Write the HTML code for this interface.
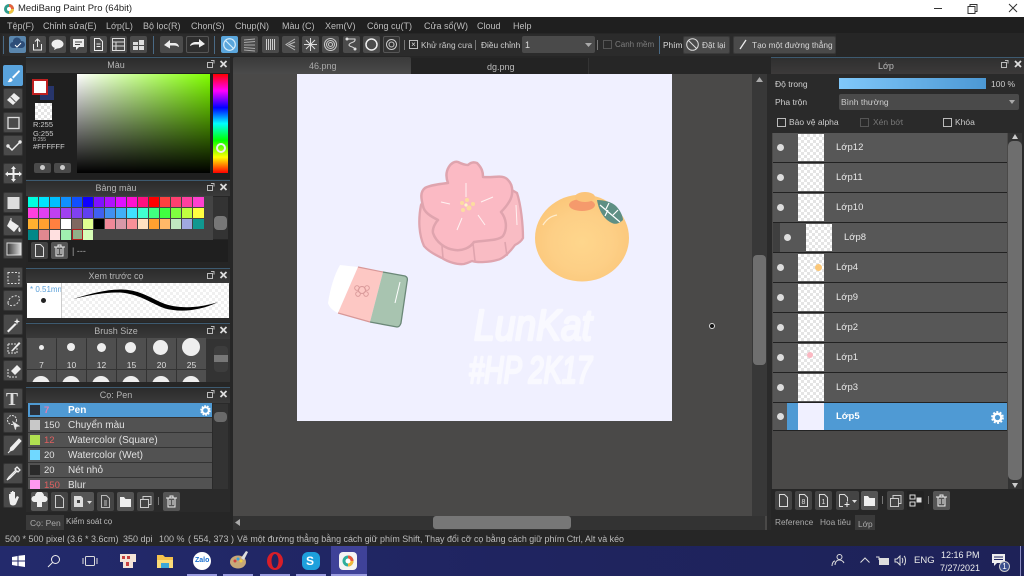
<!DOCTYPE html>
<html lang="vi"><head><meta charset="utf-8"><title>MediBang Paint Pro</title>
<style>
*{box-sizing:border-box}
html,body{margin:0;padding:0;width:1024px;height:576px;overflow:hidden;background:#262626;font-family:"Liberation Sans",sans-serif;font-size:9px;color:#cfcfcf}
div,span,svg{position:absolute}
.t{white-space:nowrap;line-height:12px}
.m{top:20px;font-size:9px;color:#bdbdbd;white-space:nowrap;line-height:12px}
.b{width:17px;height:17px;top:36px;background:#4b4b4b;border-radius:2px}
.b svg{left:0;top:0}
.l{left:3px;width:20px;height:21px;background:#4a4a4a;border-radius:2px;border:1px solid #333}
.l svg{left:1px;top:1px}
.h{left:26px;width:204px;height:16px;background:linear-gradient(#2b2b2b,#3a3a3a);border-top:1px solid #3d5a70;text-align:center;color:#b5b5b5;line-height:15px;font-size:9px;padding-right:24px}
.sep{width:1px;background:#777}
.s{width:11px;height:11px;border-right:1px solid #444;border-bottom:1px solid #444}
.cell{width:29px;height:31px;background:#4f4f4f}
.dot{background:#eee;border-radius:50%}
.num{width:29px;text-align:center;color:#ddd;line-height:10px;font-size:8.500px}
.row{left:28px;width:184px;height:15px;background:#525252;border-bottom:1px solid #333;font-size:9.500px;line-height:15px;color:#e0e0e0}
.row i{position:absolute;left:2px;top:2px;width:10px;height:10px;font-style:normal}
.row b{position:absolute;left:16px;font-weight:normal;top:0}
.row u{position:absolute;left:40px;text-decoration:none;top:0;font-size:10px;white-space:nowrap}
.lay{left:773px;width:234px;height:30px;background:#575757;border-bottom:1px solid #222}
.eye{width:7px;height:7px;border-radius:50%;background:#ddd;top:11px;left:4px}
.th{left:25px;top:1px;width:26px;height:27px;background-color:#fff;background-image:linear-gradient(45deg,#e4e4e4 25%,transparent 25%,transparent 75%,#e4e4e4 75%),linear-gradient(45deg,#e4e4e4 25%,transparent 25%,transparent 75%,#e4e4e4 75%);background-size:6px 6px;background-position:0 0,3px 3px}
.nm{left:63px;top:9px;font-size:9.500px;color:#e8e8e8;line-height:12px;white-space:nowrap}
.tb{width:17px;height:19px;background:#4a4a4a;border-radius:2px;top:491px}
.tb svg{left:0;top:0}
.tk{top:574px;height:2px;background:#9a9ce0}
</style></head><body>

<!-- title bar -->
<div style="left:0;top:0;width:1024px;height:17px;background:#fff"></div>
<svg style="left:3px;top:3px" width="12" height="12" viewBox="0 0 12 12"><circle cx="6" cy="6" r="5" fill="#2f9c8c"/><path d="M6 1a5 5 0 0 1 5 5H6z" fill="#e8623c"/><path d="M6 6h5a5 5 0 0 1-5 5z" fill="#f0c23c"/><circle cx="6" cy="6" r="2" fill="#fff"/></svg>
<div class="t" style="left:18px;top:3px;color:#222;font-size:9.500px">MediBang Paint Pro (64bit)</div>
<svg style="left:930px;top:1px" width="94" height="14" viewBox="0 0 94 14" fill="none" stroke="#333" stroke-width="1"><path d="M4 7.500h8"/><path d="M38 5.500h7v7h-7zM40 5.500v-2h7v7h-2"/><path d="M79 3l8 8M87 3l-8 8"/></svg>

<!-- menu -->
<div style="left:0;top:17px;width:1024px;height:16px;background:#1f1f1f"></div>
<div class="m" style="left:7px">Tệp(F)</div>
<div class="m" style="left:43px">Chỉnh sửa(E)</div>
<div class="m" style="left:106px">Lớp(L)</div>
<div class="m" style="left:143px">Bộ lọc(R)</div>
<div class="m" style="left:191px">Chọn(S)</div>
<div class="m" style="left:235px">Chụp(N)</div>
<div class="m" style="left:282px">Màu (C)</div>
<div class="m" style="left:325px">Xem(V)</div>
<div class="m" style="left:367px">Công cụ(T)</div>
<div class="m" style="left:424px">Cửa sổ(W)</div>
<div class="m" style="left:477px">Cloud</div>
<div class="m" style="left:513px">Help</div>

<!-- toolbar -->
<div style="left:0;top:33px;width:1024px;height:24px;background:#262626"></div>
<div style="left:2px;top:34px;width:834px;height:22px;background:#2b2b2b"></div>
<div class="sep" style="left:3px;top:36px;height:18px;background:#4a6a85"></div>
<div class="b" style="left:9px;background:#5a86ad"><svg width="17" height="17"><path d="M4 12a3 3 0 0 1 0-6 4 4 0 0 1 8-1 3.500 3.500 0 0 1 1 7z" fill="#2d4d78"/><path d="M6 9l2 2 4-4" stroke="#fff" fill="none"/></svg></div>
<div class="b" style="left:29px"><svg width="17" height="17" fill="none" stroke="#eee"><path d="M4.500 8v6h8V8M8.500 11V3M6 5.500l2.500-2.500 2.500 2.500"/></svg></div>
<div class="b" style="left:49px"><svg width="17" height="17"><ellipse cx="8.500" cy="8" rx="6" ry="4.500" fill="#eee"/><path d="M6 11l-1 3 4-2z" fill="#eee"/></svg></div>
<div class="b" style="left:70px"><svg width="17" height="17"><path d="M3 3h11v8H9l-3 3v-3H3z" fill="#eee"/><path d="M5 6h7M5 8.500h5" stroke="#444"/></svg></div>
<div class="b" style="left:90px"><svg width="17" height="17" fill="none" stroke="#eee"><path d="M4.500 2.500h5l3 3v9h-8zM6.500 8h4M6.500 10.500h4"/></svg></div>
<div class="b" style="left:110px"><svg width="17" height="17" fill="none" stroke="#ddd"><path d="M2.500 2.500h12v12h-12zM2.500 6h12M2.500 10h12M6 6v8"/></svg></div>
<div class="b" style="left:130px"><svg width="17" height="17"><path d="M3 6h5v3H3zM9 4h5v5H9zM3 10h5v4H3zM9 10h5v4H9z" fill="#ddd"/></svg></div>
<div class="sep" style="left:153px;top:36px;height:18px;background:#4a6a85"></div>
<div class="b" style="left:160px;width:23px"><svg width="23" height="17"><path d="M4 9l6-5v3h5c2 0 4 2 4 4-2-1-3-1.500-5-1.500h-4v3z" fill="#eee"/></svg></div>
<div class="b" style="left:186px;width:23px;background:#2e2e2e;border:1px solid #555"><svg width="21" height="15"><path d="M18 7l-6-5v3H8c-2 0-5 2-5 4 2-1 3-1.500 5-1.500h4v3z" fill="#eee"/></svg></div>
<div class="sep" style="left:214px;top:36px;height:18px;background:#4a6a85"></div>
<div class="b" style="left:221px;background:#5aa6dc"><svg width="17" height="17" fill="none" stroke="#d5ecfa" stroke-width="1.200"><circle cx="8.500" cy="8.500" r="5.800"/><path d="M4.500 4.500l8 8"/></svg></div>
<div class="b" style="left:241px"><svg width="17" height="17" fill="none" stroke="#aaa"><path d="M3 4l11-1M3 6.500l11-1M3 9h11M3 11.500l11 1M3 14l11 1"/></svg></div>
<div class="b" style="left:262px"><svg width="17" height="17" fill="none" stroke="#ccc"><path d="M4.500 3v11M6.500 3v11M8.500 3v11M10.500 3v11M12.500 3v11"/></svg></div>
<div class="b" style="left:282px"><svg width="17" height="17" fill="none" stroke="#bbb"><path d="M13 3L4 8.500 13 14M13 6L7 8.500 13 11"/></svg></div>
<div class="b" style="left:302px"><svg width="17" height="17" fill="none" stroke="#ddd"><path d="M8.500 2v13M2 8.500h13M4 4l9 9M13 4l-9 9"/></svg></div>
<div class="b" style="left:322px"><svg width="17" height="17" fill="none" stroke="#ccc"><circle cx="8.500" cy="8.500" r="6"/><circle cx="8.500" cy="8.500" r="4"/><circle cx="8.500" cy="8.500" r="2"/></svg></div>
<div class="b" style="left:343px"><svg width="17" height="17" fill="none" stroke="#ddd"><path d="M4 3h8c1 4-6 3-6 6 0 2 4 1 6 4"/><circle cx="4" cy="3" r="1" fill="#eee"/><circle cx="12" cy="13" r="1" fill="#eee"/></svg></div>
<div class="b" style="left:363px"><svg width="17" height="17" fill="none" stroke="#eee" stroke-width="1.500"><circle cx="8.500" cy="8.500" r="5.500"/></svg></div>
<div class="b" style="left:383px;background:#333;border:1px solid #555"><svg width="15" height="15" fill="none" stroke="#ccc"><circle cx="7.500" cy="7.500" r="5"/><circle cx="7.500" cy="7.500" r="2.500"/></svg></div>
<div class="sep" style="left:404px;top:40px;height:10px"></div>
<div style="left:409px;top:40px;width:9px;height:9px;border:1px solid #bbb;color:#ddd;font-size:8px;line-height:7px;text-align:center">×</div>
<div class="t" style="left:421px;top:39px;color:#c9c9c9;font-size:8.300px">Khử răng cưa</div>
<div class="sep" style="left:475px;top:40px;height:10px"></div>
<div class="t" style="left:481px;top:39px;color:#d5d5d5;font-size:8.300px">Điều chỉnh</div>
<div style="left:522px;top:36px;width:73px;height:17px;background:#4a4a4a;border-radius:2px"></div>
<div class="t" style="left:525px;top:39px;color:#ddd">1</div>
<svg style="left:585px;top:43px" width="7" height="4"><path d="M0 0h7L3.500 4z" fill="#aaa"/></svg>
<div class="sep" style="left:597px;top:40px;height:10px"></div>
<div style="left:603px;top:40px;width:9px;height:9px;border:1px solid #555"></div>
<div class="t" style="left:615px;top:39px;color:#7d7d7d;font-size:8px">Canh mềm</div>
<div class="sep" style="left:659px;top:36px;height:18px;background:#4a6a85"></div>
<div class="t" style="left:663px;top:39px;color:#ddd;font-size:8.300px">Phím</div>
<div style="left:683px;top:36px;width:47px;height:18px;background:#4a4a4a;border-radius:2px;border:1px solid #3a3a3a"></div>
<svg style="left:685px;top:37px" width="15" height="15" fill="none" stroke="#ddd"><circle cx="7.500" cy="7.500" r="5.800"/><path d="M3.500 3.500l8 8"/></svg>
<div class="t" style="left:702px;top:39px;color:#d5d5d5;font-size:8.300px">Đặt lại</div>
<div style="left:733px;top:36px;width:103px;height:18px;background:#4a4a4a;border-radius:2px;border:1px solid #3a3a3a"></div>
<svg style="left:738px;top:39px" width="10" height="11"><path d="M2 10l6-9" stroke="#eee" stroke-width="1.300"/></svg>
<div class="t" style="left:752px;top:39px;color:#d5d5d5;font-size:8.300px">Tạo một đường thẳng</div>

<!-- left toolbar -->
<div style="left:0;top:57px;width:26px;height:473px;background:#262626"></div>
<div class="l" style="top:65px;background:#59a3dc;border-color:#59a3dc"><svg width="17" height="18"><path d="M14 3L7 10l1.500 1.500L15 4.500zM6 11c-2 0-2 3-3.500 4 3 .5 5.500-.5 5-2.500z" fill="#fff"/></svg></div>
<div class="l" style="top:88px"><svg width="17" height="18"><path d="M2 10l7-7 6 5-7 7z" fill="#eee"/><path d="M5.500 7l5 5" stroke="#555"/></svg></div>
<div class="l" style="top:112px"><svg width="17" height="18"><rect x="3" y="3.500" width="11" height="11" fill="none" stroke="#ddd" stroke-width="1.300"/></svg></div>
<div class="l" style="top:135px"><svg width="17" height="18" fill="none" stroke="#eee" stroke-width="1.400"><path d="M3 9l4 4 8-8"/><circle cx="3" cy="9" r="1"/><circle cx="15" cy="5" r="1"/></svg></div>
<div class="l" style="top:163px"><svg width="17" height="18"><path d="M8.500 1l2.500 3H9.500v4H14V6.500L17 9l-3 2.500V10H9.500v4H11l-2.500 3L6 14h1.500v-4H3v1.500L0 9l3-2.500V8h4.500V4H6z" fill="#eee"/></svg></div>
<div class="l" style="top:192px"><svg width="17" height="18"><rect x="2.500" y="3" width="12" height="12" fill="#ddd"/></svg></div>
<div class="l" style="top:215px"><svg width="17" height="18"><path d="M5 3l9 6-5 6-7-6z" fill="#eee"/><path d="M6 1v5" stroke="#eee"/><path d="M14 10c2 2 2 4 1 5-2 0-2-3-1-5z" fill="#eee"/></svg></div>
<div class="l" style="top:238px"><svg width="17" height="18"><defs><linearGradient id="g1"><stop offset="0" stop-color="#333"/><stop offset="1" stop-color="#ddd"/></linearGradient></defs><rect x="2" y="3" width="14" height="12" fill="url(#g1)" stroke="#ddd"/></svg></div>
<div class="l" style="top:267px"><svg width="17" height="18"><rect x="3" y="3.500" width="11" height="11" fill="none" stroke="#ddd" stroke-dasharray="2 1.500"/></svg></div>
<div class="l" style="top:290px"><svg width="17" height="18"><path d="M3 11c0-5 6-8 10-7 3 2 1 7-3 9-3 1-7 1-7-2z" fill="none" stroke="#ddd" stroke-dasharray="2 1.500"/></svg></div>
<div class="l" style="top:314px"><svg width="17" height="18"><path d="M2 15l8-8 1.500 1.500-8 8z" fill="#eee"/><path d="M12 2l.7 2.500L15 5.500l-2.300 1L12 9l-.7-2.500L9 5.500l2.300-1z" fill="#eee"/></svg></div>
<div class="l" style="top:337px"><svg width="17" height="18"><path d="M3 5h8M3 5v9h9V9" fill="none" stroke="#ddd" stroke-dasharray="2 1"/><path d="M6 12l8-9 1.500 1.500-8 8z" fill="#eee"/></svg></div>
<div class="l" style="top:360px"><svg width="17" height="18"><path d="M3 7v8h9" fill="none" stroke="#ddd" stroke-dasharray="2 1"/><path d="M6 9l6-6 4 4-6 6z" fill="#eee"/></svg></div>
<div class="l" style="top:388px"><div class="t" style="left:2px;top:2px;font:bold 18px/17px 'Liberation Serif',serif;color:#ddd">T</div></div>
<div class="l" style="top:412px"><svg width="17" height="18" fill="none" stroke="#ddd"><circle cx="7" cy="6" r="4.500" stroke-dasharray="2 1"/><path d="M8 8l6 4-3 .5-.5 3z" fill="#eee"/></svg></div>
<div class="l" style="top:435px"><svg width="17" height="18"><path d="M14 2l2 2-8 9-3 1 .5-3zM5 14l-2 2" fill="#eee" stroke="#eee"/></svg></div>
<div class="l" style="top:463px"><svg width="17" height="18"><path d="M12 2l3 3-2 2-1-1-7 7-3 2 2-3 7-7-1-1z" fill="none" stroke="#eee" stroke-width="1.300"/></svg></div>
<div class="l" style="top:487px"><svg width="17" height="18"><path d="M4 9V5h1.500v4V3H7v6V2h1.500v7V3H10v7l2-3 2 1-3 7c-1 2-5 2-6 0z" fill="#eee"/></svg></div>

<!-- colour panel -->
<div style="left:26px;top:73px;width:204px;height:106px;background:#1f1f1f"></div>
<div class="h" style="top:57px">Màu</div>
<svg style="left:207px;top:60px" width="22" height="9"><path d="M.5 2.500h5v5h-5zM4 .5h3v3" fill="none" stroke="#bbb"/><path d="M13.500 1l6 6M19.500 1l-6 6" stroke="#ddd" stroke-width="1.800"/></svg>
<div style="left:40px;top:86px;width:14px;height:14px;background:#27356b"></div>
<div style="left:32px;top:79px;width:16px;height:16px;background:#fff;border:2px solid #c02020"></div>
<div class="th" style="left:35px;top:103px;width:17px;height:17px"></div>
<div class="t" style="left:33px;top:120px;font-size:7.500px;line-height:9px;color:#ccc">R:255<br>G:255</div>
<div class="t" style="left:33px;top:137px;font-size:5px;line-height:6px;color:#bbb">B:255</div>
<div class="t" style="left:33px;top:142px;font-size:7.500px;line-height:10px;color:#ccc">#FFFFFF</div>
<div style="left:34px;top:163px;width:17px;height:10px;background:#4a4a4a;border-radius:2px"></div>
<div style="left:54px;top:163px;width:17px;height:10px;background:#4a4a4a;border-radius:2px"></div>
<div class="dot" style="left:40px;top:165px;width:5px;height:5px;background:#ccc"></div>
<div class="dot" style="left:60px;top:165px;width:5px;height:5px;background:#ccc"></div>
<div style="left:77px;top:74px;width:133px;height:99px;background:linear-gradient(transparent,#000),linear-gradient(90deg,#fff,#80ff00)"></div>
<div style="left:213px;top:74px;width:15px;height:99px;background:linear-gradient(#ff0000 0%,#ff00ff 17%,#0000ff 34%,#00ffff 50%,#00ff00 67%,#ffff00 84%,#ff0000 100%)"></div>
<div style="left:216px;top:143px;width:10px;height:10px;border:2px solid #eee;border-radius:50%"></div>

<!-- palette panel -->
<div style="left:26px;top:196px;width:204px;height:72px;background:#252525"></div>
<div class="h" style="top:180px">Bảng màu</div>
<svg style="left:207px;top:183px" width="22" height="9"><path d="M.5 2.500h5v5h-5zM4 .5h3v3" fill="none" stroke="#bbb"/><path d="M13.500 1l6 6M19.500 1l-6 6" stroke="#ddd" stroke-width="1.800"/></svg>
<div style="left:28px;top:196px;width:185px;height:44px;background:#444"></div>
<div class="s" style="left:28px;top:197px;background:#00ffe0"></div><div class="s" style="left:39px;top:197px;background:#00e4ff"></div><div class="s" style="left:50px;top:197px;background:#00bfff"></div><div class="s" style="left:61px;top:197px;background:#1090ff"></div><div class="s" style="left:72px;top:197px;background:#1050ff"></div><div class="s" style="left:83px;top:197px;background:#1000ff"></div><div class="s" style="left:94px;top:197px;background:#8010ff"></div><div class="s" style="left:105px;top:197px;background:#b010ff"></div><div class="s" style="left:116px;top:197px;background:#e010ff"></div><div class="s" style="left:127px;top:197px;background:#ff10d0"></div><div class="s" style="left:138px;top:197px;background:#ff1080"></div><div class="s" style="left:149px;top:197px;background:#ff0000"></div><div class="s" style="left:160px;top:197px;background:#ff4040"></div><div class="s" style="left:171px;top:197px;background:#ff4070"></div><div class="s" style="left:182px;top:197px;background:#ff40a0"></div><div class="s" style="left:193px;top:197px;background:#ff40d0;width:12px"></div>
<div class="s" style="left:28px;top:208px;background:#ff40e0"></div><div class="s" style="left:39px;top:208px;background:#e040f0"></div><div class="s" style="left:50px;top:208px;background:#c040f0"></div><div class="s" style="left:61px;top:208px;background:#a040f0"></div><div class="s" style="left:72px;top:208px;background:#8040f0"></div><div class="s" style="left:83px;top:208px;background:#6040f0"></div><div class="s" style="left:94px;top:208px;background:#4060f0"></div><div class="s" style="left:105px;top:208px;background:#4090f0"></div><div class="s" style="left:116px;top:208px;background:#40b0f8"></div><div class="s" style="left:127px;top:208px;background:#40e0ff"></div><div class="s" style="left:138px;top:208px;background:#40ffd0"></div><div class="s" style="left:149px;top:208px;background:#40ff80"></div><div class="s" style="left:160px;top:208px;background:#40ff40"></div><div class="s" style="left:171px;top:208px;background:#80ff40"></div><div class="s" style="left:182px;top:208px;background:#c0ff40"></div><div class="s" style="left:193px;top:208px;background:#ffff40;width:12px"></div>
<div class="s" style="left:28px;top:219px;background:#ffb030"></div><div class="s" style="left:39px;top:219px;background:#ffa030"></div><div class="s" style="left:50px;top:219px;background:#ff8040"></div><div class="s" style="left:61px;top:219px;background:#ffffff"></div><div class="s" style="left:72px;top:219px;background:#806860"></div><div class="s" style="left:83px;top:219px;background:#e0ff90"></div><div class="s" style="left:94px;top:219px;background:#000000"></div><div class="s" style="left:105px;top:219px;background:#f08898"></div><div class="s" style="left:116px;top:219px;background:#d898a8"></div><div class="s" style="left:127px;top:219px;background:#f89098"></div><div class="s" style="left:138px;top:219px;background:#ffe0c0"></div><div class="s" style="left:149px;top:219px;background:#ffa030"></div><div class="s" style="left:160px;top:219px;background:#ffb868"></div><div class="s" style="left:171px;top:219px;background:#c0e8c0"></div><div class="s" style="left:182px;top:219px;background:#a0a8e0"></div><div class="s" style="left:193px;top:219px;background:#109890;width:12px"></div>
<div class="s" style="left:28px;top:230px;background:#008888"></div><div class="s" style="left:39px;top:230px;background:#e08890"></div><div class="s" style="left:50px;top:230px;background:#ffe0e0"></div><div class="s" style="left:61px;top:230px;background:#a0f0b0"></div><div class="s" style="left:72px;top:229px;background:#90b088;border:1px solid #b02020;height:11px"></div><div class="s" style="left:83px;top:230px;background:#d8ffb8"></div>
<div style="left:213px;top:197px;width:15px;height:42px;background:#333"></div>
<div style="left:214px;top:216px;width:13px;height:14px;background:#777;border-radius:4px"></div>
<div style="left:28px;top:240px;width:200px;height:22px;background:#1f1f1f"></div>
<div class="b" style="left:31px;top:242px;background:#444"><svg width="17" height="17" fill="none" stroke="#ddd"><path d="M4.500 2.500h5l3 3v9h-8z"/></svg></div>
<div class="b" style="left:51px;top:242px;background:#555"><svg width="17" height="17" fill="none" stroke="#eee"><path d="M3 5h11M5 5v9h7V5M7 5V3h3v2M7 7v5M10 7v5"/></svg></div>
<div class="t" style="left:72px;top:245px;color:#aaa">| ---</div>

<!-- preview panel -->
<div style="left:26px;top:284px;width:204px;height:38px;background:#2a2a2a"></div>
<div class="h" style="top:268px">Xem trước cọ</div>
<svg style="left:207px;top:271px" width="22" height="9"><path d="M.5 2.500h5v5h-5zM4 .5h3v3" fill="none" stroke="#bbb"/><path d="M13.500 1l6 6M19.500 1l-6 6" stroke="#ddd" stroke-width="1.800"/></svg>
<div style="left:27px;top:283px;width:35px;height:35px;background:#fff;border-right:1px solid #ccc;overflow:hidden"><div class="t" style="left:3px;top:1px;color:#5a9fd8;font-size:8px">* 0.51mm</div></div>
<div class="dot" style="left:41px;top:298px;width:5px;height:5px;background:#222"></div>
<div class="th" style="left:62px;top:283px;width:167px;height:35px;background-image:linear-gradient(45deg,#f0f0f0 25%,transparent 25%,transparent 75%,#f0f0f0 75%),linear-gradient(45deg,#f0f0f0 25%,transparent 25%,transparent 75%,#f0f0f0 75%)"></div>
<svg style="left:62px;top:283px" width="167" height="35" viewBox="62 283 167 35"><path d="M73 299C90 294 105 289.500 120 289.500C140 289.500 150 298 165 304C180 309 200 308 218 302C200 311 180 312.500 165 308.500C150 303 140 294 120 292.500C105 292 90 295 73 299z" fill="#000"/></svg>

<!-- brush size -->
<div style="left:26px;top:339px;width:204px;height:48px;background:#333"></div>
<div class="h" style="top:323px">Brush Size</div>
<svg style="left:207px;top:326px" width="22" height="9"><path d="M.5 2.500h5v5h-5zM4 .5h3v3" fill="none" stroke="#bbb"/><path d="M13.500 1l6 6M19.500 1l-6 6" stroke="#ddd" stroke-width="1.800"/></svg>
<div class="cell" style="left:27px;top:338px"></div><div class="cell" style="left:57px;top:338px"></div><div class="cell" style="left:87px;top:338px"></div><div class="cell" style="left:117px;top:338px"></div><div class="cell" style="left:147px;top:338px"></div><div class="cell" style="left:177px;top:338px"></div>
<div class="cell" style="left:27px;top:370px;height:12px"></div><div class="cell" style="left:57px;top:370px;height:12px"></div><div class="cell" style="left:87px;top:370px;height:12px"></div><div class="cell" style="left:117px;top:370px;height:12px"></div><div class="cell" style="left:147px;top:370px;height:12px"></div><div class="cell" style="left:177px;top:370px;height:12px"></div>
<div class="dot" style="left:39px;top:345px;width:5px;height:5px"></div><div class="dot" style="left:67px;top:343px;width:8px;height:8px"></div><div class="dot" style="left:97px;top:343px;width:9px;height:9px"></div><div class="dot" style="left:125px;top:342px;width:11px;height:11px"></div><div class="dot" style="left:153px;top:340px;width:15px;height:15px"></div><div class="dot" style="left:182px;top:338px;width:18px;height:18px"></div>
<div class="num" style="left:27px;top:360px">7</div><div class="num" style="left:57px;top:360px">10</div><div class="num" style="left:87px;top:360px">12</div><div class="num" style="left:117px;top:360px">15</div><div class="num" style="left:147px;top:360px">20</div><div class="num" style="left:177px;top:360px">25</div>
<div class="dot" style="left:32px;top:376px;width:18px;height:18px;clip-path:inset(0 0 12px 0)"></div><div class="dot" style="left:62px;top:376px;width:18px;height:18px;clip-path:inset(0 0 12px 0)"></div><div class="dot" style="left:92px;top:376px;width:18px;height:18px;clip-path:inset(0 0 12px 0)"></div><div class="dot" style="left:122px;top:376px;width:18px;height:18px;clip-path:inset(0 0 12px 0)"></div><div class="dot" style="left:152px;top:376px;width:18px;height:18px;clip-path:inset(0 0 12px 0)"></div><div class="dot" style="left:182px;top:376px;width:18px;height:18px;clip-path:inset(0 0 12px 0)"></div>
<div style="left:26px;top:382px;width:204px;height:5px;background:#262626"></div>
<div style="left:214px;top:346px;width:14px;height:26px;background:#3d3d3d;border-radius:4px"></div>
<div style="left:214px;top:355px;width:14px;height:7px;background:#777"></div>

<!-- brush list -->
<div style="left:26px;top:403px;width:204px;height:109px;background:#2a2a2a"></div>
<div class="h" style="top:387px">Cọ: Pen</div>
<svg style="left:207px;top:390px" width="22" height="9"><path d="M.5 2.500h5v5h-5zM4 .5h3v3" fill="none" stroke="#bbb"/><path d="M13.500 1l6 6M19.500 1l-6 6" stroke="#ddd" stroke-width="1.800"/></svg>
<div class="row" style="top:403px;background:#4f9ad4;color:#fff;font-weight:bold"><i style="background:#2a2f3a"></i><b style="color:#e080b0;font-weight:bold">7</b><u>Pen</u></div>
<svg style="left:200px;top:405px" width="11" height="11"><circle cx="5.500" cy="5.500" r="3.300" fill="none" stroke="#fff" stroke-width="2"/><circle cx="5.500" cy="5.500" r="4.600" fill="none" stroke="#fff" stroke-width="1.400" stroke-dasharray="1.600 1.300"/></svg>
<div class="row" style="top:418px"><i style="background:#c8c8c8"></i><b>150</b><u>Chuyển màu</u></div>
<div class="row" style="top:433px"><i style="background:#b0e050"></i><b style="color:#e06060">12</b><u>Watercolor (Square)</u></div>
<div class="row" style="top:448px"><i style="background:#70d8ff"></i><b>20</b><u>Watercolor (Wet)</u></div>
<div class="row" style="top:463px"><i style="background:#2a2a2a"></i><b>20</b><u>Nét nhỏ</u></div>
<div class="row" style="top:478px;height:11px;overflow:hidden;border:0"><i style="background:#ff98f0"></i><b style="color:#e06060">150</b><u>Blur</u></div>
<div style="left:213px;top:404px;width:15px;height:85px;background:#333"></div>
<div style="left:214px;top:412px;width:13px;height:10px;background:#6a6a6a;border-radius:4px"></div>
<div class="tb" style="left:31px;top:492px;background:#555"><svg width="17" height="19"><path d="M3 10a3 3 0 0 1 1-6 4.500 4.500 0 0 1 9 0 3 3 0 0 1 1 6h-3v5H6v-5z" fill="#eee"/></svg></div>
<div class="tb" style="left:51px;top:492px;background:#444"><svg width="17" height="19" fill="none" stroke="#ccc"><path d="M4.500 3.500h5l3 3v9h-8z"/></svg></div>
<div class="tb" style="left:71px;top:492px;width:23px;background:#555"><svg width="23" height="19"><path d="M3 4h7l2 2v9H3z" fill="#ddd"/><path d="M6 8h3v3H6z" fill="#444"/><path d="M16 9h5l-2.500 3z" fill="#ddd"/></svg></div>
<div class="tb" style="left:97px;top:492px;background:#444"><svg width="17" height="19" fill="none" stroke="#bbb"><path d="M4.500 3.500h5l3 3v9h-8zM7 9h3M7 11h3M7 13h3"/></svg></div>
<div class="tb" style="left:117px;top:492px;background:#555"><svg width="17" height="19"><path d="M3 5h4l1.500 2H14v8H3z" fill="#eee"/></svg></div>
<div class="tb" style="left:137px;top:492px;background:#444"><svg width="17" height="19" fill="none" stroke="#ccc"><path d="M3.500 7.500h8v8h-8zM6 7V4.500h8v8h-2"/></svg></div>
<div class="sep" style="left:158px;top:497px;height:8px"></div>
<div class="tb" style="left:163px;top:492px;background:#555"><svg width="17" height="19" fill="none" stroke="#eee"><path d="M3 6h11M5 6v9h7V6M7 6V4h3v2M7 8v5M10 8v5"/></svg></div>

<!-- left tabs -->
<div style="left:26px;top:512px;width:204px;height:18px;background:#262626"></div>
<div style="left:26px;top:515px;width:38px;height:15px;background:#3a3a3a"></div>
<div class="t" style="left:30px;top:517px;color:#aaa;font-size:8.500px">Cọ: Pen</div>
<div class="t" style="left:66px;top:516px;color:#bbb;font-size:8px">Kiểm soát cọ</div>

<!-- tabs row -->
<div style="left:230px;top:56px;width:541px;height:18px;background:#262626"></div>
<div style="left:233px;top:57px;width:178px;height:17px;background:linear-gradient(#3a3a3a,#4a4a4a);border-radius:2px 2px 0 0"></div>
<div class="t" style="left:309px;top:60px;color:#aaa">46.png</div>
<div style="left:411px;top:58px;width:178px;height:16px;background:#232323;border-right:1px solid #333"></div>
<div class="t" style="left:487px;top:61px;color:#bbb">dg.png</div>

<!-- canvas area -->
<div style="left:233px;top:74px;width:538px;height:456px;background:#4a4948"></div>
<div style="left:752px;top:74px;width:15px;height:442px;background:#383838"></div>
<div style="left:753px;top:255px;width:13px;height:110px;background:#6f6f6f;border-radius:4px"></div>
<svg style="left:756px;top:77px" width="7" height="5"><path d="M3.500 0L7 5H0z" fill="#aaa"/></svg>
<div style="left:233px;top:516px;width:532px;height:14px;background:#333"></div>
<div style="left:433px;top:516px;width:138px;height:13px;background:#777;border-radius:3px"></div>
<svg style="left:235px;top:519px" width="5" height="7"><path d="M0 3.500L5 0v7z" fill="#aaa"/></svg>
<div style="left:767px;top:74px;width:4px;height:456px;background:#2a2a2a"></div>
<svg style="left:708px;top:322px" width="8" height="8"><circle cx="4" cy="4" r="2.500" fill="#111" stroke="#ddd"/></svg>

<!-- canvas art: coordinates are page coordinates -->
<svg style="left:297px;top:74px" width="375" height="347" viewBox="297 74 375 347">
<defs><radialGradient id="org" cx=".5" cy=".55" r=".55"><stop offset="0" stop-color="#fed68c"/><stop offset=".6" stop-color="#fdcf86"/><stop offset="1" stop-color="#fbc77a"/></radialGradient></defs>
<rect x="297" y="74" width="375" height="347" fill="#f0f0ff"/>
<!-- mochi base -->
<path d="M421 205C418 220 419 235 424 246C430 253 438 256 442 258C448 262 458 265 464 264C468 263 470 262 472 261C478 263 490 262 497 260C503 259 510 252 515 245C519 243 522 240 523 238C523 225 521 205 517 193L505 186L430 190z" fill="#f9bcc4" stroke="#dfa4ae" stroke-width="2.300" stroke-linejoin="round"/>
<path d="M442 246l1 12M473 243l2 18M505 242l2 14" fill="none" stroke="#dfa4ae" stroke-width="1.600"/>
<path d="M516 205l1 20" stroke="#fff0f0" stroke-width="1"/>
<!-- flower -->
<path d="M448 183C443 170 452 160 458 162C462 164 466 165 468 165Q472 161 477 163C482 168 483 172 483 177C495 178 503 174 508 180C514 186 513 196 509 202C506 207 503 210 501 212C506 218 508 228 503 236C498 241 485 240 474 242C470 248 462 251 455 250C445 249 436 242 433 233C432 228 436 222 438 220C430 216 424 212 423 206C421 198 420 192 425 188C430 185 440 184 448 183z" fill="#fbbac4" stroke="#dfa4ae" stroke-width="2.500" stroke-linejoin="round"/>
<g fill="none" stroke="#fff2f2" stroke-width="1"><path d="M466 183l0 14M441 202l9 2M493 197l-12 5M457 230l5-12M485 225l-7-10"/></g>
<g fill="#fcdca0"><circle cx="462" cy="203" r="2"/><circle cx="467" cy="200" r="2"/><circle cx="463" cy="210" r="2"/><circle cx="469" cy="208" r="2.500"/><circle cx="473" cy="204" r="2"/><circle cx="466" cy="205" r="1.600" fill="#fff5c8"/></g>
<!-- orange -->
<ellipse cx="582" cy="238" rx="47" ry="43.500" fill="url(#org)"/>
<path d="M543 225c3-5 8-9 14-10" stroke="#ffeccc" stroke-width="1.300" fill="none"/>
<ellipse cx="582" cy="205" rx="13" ry="6" fill="#f59a6c"/>
<ellipse cx="585" cy="197" rx="10" ry="5" fill="#fbc47a"/>
<path d="M597 200C604 200 612 202 616 206C620 210 623 216 623 220C620 223 616 225 612 223C605 220 599 212 597 200z" fill="#5e8f84"/>
<path d="M600 205l20 17M608 210l-3 6M613 215l5-5M606 209l3-6" stroke="#fff" stroke-width="1.200" fill="none"/>
<!-- eraser -->
<path d="M340 265L358 267L338 313C333 311 329 307 328 303C330 290 334 275 340 265z" fill="#fff"/>
<path d="M358 267L383 272L370 322L338 313z" fill="#fdc8c4"/>
<path d="M383 272L405 276C407 277 408 278 407 282L401 323C400 326 399 327 397 327L370 322z" fill="#a8c4b0"/>
<path d="M358 267L383 272M338 313L370 322" stroke="#d89898" stroke-width="1.200" fill="none"/>
<path d="M383 272L405 276C407 277 408 278 407 282L401 323C400 326 399 327 397 327L370 322" stroke="#6b8878" stroke-width="1.300" fill="none"/>
<path d="M400 282L395 303" stroke="#fff" stroke-width="1"/>
<g fill="none" stroke="#d89898" stroke-width=".9"><circle cx="362" cy="290" r="3.500"/><circle cx="357" cy="288" r="2.300"/><circle cx="367" cy="288" r="2.300"/><circle cx="358" cy="294" r="2.300"/><circle cx="366" cy="294" r="2.300"/></g>
<!-- handwriting -->
<text x="474" y="340" font-family="Liberation Sans,sans-serif" font-style="italic" font-size="44" fill="#f9f9ff" stroke="#f9f9ff" stroke-width="2.500" stroke-linejoin="round" textLength="118" lengthAdjust="spacingAndGlyphs">LunKat</text>
<text x="469" y="383" font-family="Liberation Sans,sans-serif" font-style="italic" font-size="38" fill="#f9f9ff" stroke="#f9f9ff" stroke-width="2.500" stroke-linejoin="round" textLength="123" lengthAdjust="spacingAndGlyphs">#HP 2K17</text>
</svg>

<!-- right panel -->
<div style="left:771px;top:57px;width:253px;height:473px;background:#2a2a2a"></div>
<div style="left:771px;top:57px;width:253px;height:17px;background:linear-gradient(#2f2f2f,#3c3a3a);border-top:1px solid #3d5a70"></div>
<div class="t" style="left:878px;top:60px;color:#bbb">Lớp</div>
<svg style="left:1001px;top:60px" width="22" height="9"><path d="M.5 2.500h5v5h-5zM4 .5h3v3" fill="none" stroke="#bbb"/><path d="M14 1l6 6M20 1l-6 6" stroke="#ddd" stroke-width="1.800"/></svg>
<div class="t" style="left:775px;top:78px;color:#d0d0d0;font-size:8.500px">Độ trong</div>
<div style="left:839px;top:78px;width:147px;height:11px;background:linear-gradient(90deg,#80c8fa,#4c98d4)"></div>
<div class="t" style="left:991px;top:78px;color:#ccc;font-size:8.500px">100 %</div>
<div class="t" style="left:775px;top:96px;color:#d0d0d0;font-size:8.500px">Pha trộn</div>
<div style="left:839px;top:94px;width:180px;height:16px;background:#4a4a4a;border-radius:2px"></div>
<div class="t" style="left:841px;top:96px;color:#ccc;font-size:8.500px">Bình thường</div>
<svg style="left:1009px;top:100px" width="6" height="4"><path d="M0 0h6L3 4z" fill="#aaa"/></svg>
<div style="left:777px;top:118px;width:9px;height:9px;border:1px solid #bbb"></div>
<div class="t" style="left:789px;top:116px;color:#ccc;font-size:8.500px">Bảo vệ alpha</div>
<div style="left:860px;top:118px;width:9px;height:9px;border:1px solid #555"></div>
<div class="t" style="left:873px;top:116px;color:#777;font-size:8.500px">Xén bớt</div>
<div style="left:943px;top:118px;width:9px;height:9px;border:1px solid #bbb"></div>
<div class="t" style="left:955px;top:116px;color:#ccc;font-size:8.500px">Khóa</div>
<div style="left:772px;top:133px;width:236px;height:356px;background:#4a4948"></div>

<div class="lay" style="top:133px"><div class="eye"></div><div class="th"></div><div class="nm">Lớp12</div></div>
<div class="lay" style="top:163px"><div class="eye"></div><div class="th"></div><div class="nm">Lớp11</div></div>
<div class="lay" style="top:193px"><div class="eye"></div><div class="th"></div><div class="nm">Lớp10</div></div>
<div class="lay" style="top:223px"><div style="left:0;top:0;width:7px;height:29px;background:#3f3f3f"></div><div class="eye" style="left:11px"></div><div class="th" style="left:33px"></div><div class="nm" style="left:71px">Lớp8</div></div>
<div class="lay" style="top:253px"><div class="eye"></div><div class="th"></div><div class="dot" style="left:42px;top:11px;width:7px;height:7px;background:#fbc778"></div><div class="nm">Lớp4</div></div>
<div class="lay" style="top:283px"><div class="eye"></div><div class="th"></div><div class="nm">Lớp9</div></div>
<div class="lay" style="top:313px"><div class="eye"></div><div class="th"></div><div class="nm">Lớp2</div></div>
<div class="lay" style="top:343px"><div class="eye"></div><div class="th"></div><div class="dot" style="left:34px;top:9px;width:6px;height:6px;background:#fbb8c2"></div><div class="nm">Lớp1</div></div>
<div class="lay" style="top:373px"><div class="eye"></div><div class="th"></div><div class="nm">Lớp3</div></div>
<div class="lay" style="top:403px;height:28px;border-bottom:1px solid #222"><div class="eye" style="top:10px"></div><div style="left:14px;top:0;width:220px;height:27px;background:#4f9ad4"></div><div class="th" style="top:0;height:27px;background:#f0f0ff"></div><div class="nm" style="font-weight:bold;color:#fff;top:8px">Lớp5</div></div>
<svg style="left:991px;top:411px" width="13" height="13"><circle cx="6.500" cy="6.500" r="3.800" fill="none" stroke="#fff" stroke-width="2.400"/><circle cx="6.500" cy="6.500" r="5.500" fill="none" stroke="#fff" stroke-width="1.800" stroke-dasharray="2 1.500"/></svg>

<div style="left:1008px;top:133px;width:14px;height:356px;background:#333"></div>
<div style="left:1008px;top:141px;width:14px;height:339px;background:#6e6e6e;border-radius:5px"></div>
<svg style="left:1012px;top:134px" width="6" height="5"><path d="M3 0l3 5H0z" fill="#ccc"/></svg>
<svg style="left:1012px;top:483px" width="6" height="5"><path d="M3 5l3-5H0z" fill="#ccc"/></svg>

<div style="left:771px;top:489px;width:253px;height:23px;background:#262626"></div>
<div class="tb" style="left:775px;background:#444"><svg width="17" height="19" fill="none" stroke="#ddd"><path d="M4.500 3.500h5l3 3v9h-8z"/></svg></div>
<div class="tb" style="left:795px;background:#444"><svg width="17" height="19" fill="none" stroke="#ddd"><path d="M4.500 3.500h5l3 3v9h-8z"/><text x="6.500" y="13" font-size="7" fill="#ddd" stroke="none">8</text></svg></div>
<div class="tb" style="left:815px;background:#444"><svg width="17" height="19" fill="none" stroke="#ddd"><path d="M4.500 3.500h5l3 3v9h-8z"/><text x="6.500" y="13" font-size="7" fill="#ddd" stroke="none">1</text></svg></div>
<div class="tb" style="left:836px;width:23px;background:#444"><svg width="23" height="19"><path d="M3.500 3.500h5l3 3v4M7 15.500H3.500v-12" fill="none" stroke="#ddd"/><path d="M11 11v5M8.500 13.500h5" stroke="#eee"/><path d="M16 9h5l-2.500 3z" fill="#ddd"/></svg></div>
<div class="tb" style="left:861px;background:#555"><svg width="17" height="19"><path d="M3 5h4l1.500 2H14v8H3z" fill="#eee"/></svg></div>
<div class="sep" style="left:882px;top:496px;height:8px"></div>
<div class="tb" style="left:887px;background:#444"><svg width="17" height="19" fill="none" stroke="#ccc"><path d="M3.500 7.500h8v8h-8zM6 7V4.500h8v8h-2"/></svg></div>
<div class="tb" style="left:907px;background:#222"><svg width="17" height="19"><path d="M3 4h5v4H3zM3 11h5v4H3zM10 7h4v4h-4z" fill="none" stroke="#ddd"/><path d="M10 7h4v4h-4z" fill="#ddd"/></svg></div>
<div class="sep" style="left:928px;top:496px;height:8px"></div>
<div class="tb" style="left:933px;background:#555"><svg width="17" height="19" fill="none" stroke="#eee"><path d="M3 6h11M5 6v9h7V6M7 6V4h3v2M7 8v5M10 8v5"/></svg></div>

<div style="left:771px;top:512px;width:253px;height:18px;background:#262626"></div>
<div class="t" style="left:775px;top:516px;color:#aaa;font-size:8.300px">Reference</div>
<div class="t" style="left:820px;top:516px;color:#aaa;font-size:8.300px">Hoa tiêu</div>
<div style="left:855px;top:515px;width:20px;height:15px;background:#3a3a3a"></div>
<div class="t" style="left:858px;top:518px;color:#aaa;font-size:8.300px">Lớp</div>

<!-- status bar -->
<div style="left:0;top:530px;width:1024px;height:16px;background:#262626"></div>
<div class="t" style="left:5px;top:533px;color:#bcbcbc;font-size:9px">500 * 500 pixel</div>
<div class="t" style="left:67px;top:533px;color:#bcbcbc;font-size:9px">(3.6 * 3.6cm)</div>
<div class="t" style="left:123px;top:533px;color:#bcbcbc;font-size:9px">350 dpi</div>
<div class="t" style="left:159px;top:533px;color:#bcbcbc;font-size:9px">100 %</div>
<div class="t" style="left:188px;top:533px;color:#bcbcbc;font-size:9px">( 554, 373 )</div>
<div class="t" style="left:237px;top:533px;color:#bcbcbc;font-size:8.900px">Vẽ một đường thẳng bằng cách giữ phím Shift, Thay đổi cỡ cọ bằng cách giữ phím Ctrl, Alt và kéo</div>

<!-- taskbar -->
<div style="left:0;top:546px;width:1024px;height:30px;background:linear-gradient(90deg,#232a6c,#1f2460 50%,#1e2258)"></div>
<svg style="left:12px;top:555px" width="13" height="12"><path d="M0 2l5.500-1v4.500H0zM6.500 .8L13 0v5.500H6.500zM0 6.500h5.500V11L0 10zM6.500 6.500H13V12l-6.500-1z" fill="#fff"/></svg>
<svg style="left:47px;top:554px" width="14" height="14" fill="none" stroke="#eee"><circle cx="8.500" cy="5.500" r="4"/><path d="M5.500 8.500L1 13"/></svg>
<svg style="left:82px;top:555px" width="16" height="12" fill="none" stroke="#ddd"><rect x="3.500" y="1.500" width="9" height="9" rx="1"/><path d="M1 3v6M15 3v6"/></svg>
<svg style="left:119px;top:553px" width="18" height="16"><rect x="1" y="1" width="16" height="8" fill="#f4e4d8"/><rect x="4" y="6" width="10" height="9" fill="#f4e4d8"/><path d="M3 3h3v3H3zM8 3h3v3H8zM7 9h3v4H7z" fill="#c84040"/></svg>
<svg style="left:156px;top:553px" width="18" height="16"><path d="M1 2h6l2 2h8v3H1z" fill="#f6c24c"/><path d="M1 7h16v8H1z" fill="#fbdc78"/><rect x="5" y="10" width="8" height="5" fill="#3ca8d8"/></svg>
<div style="left:193px;top:552px;width:18px;height:18px;background:#fff;border-radius:50%"></div>
<div class="t" style="left:195px;top:555px;color:#1a6fd0;font-size:7px;font-weight:bold">Zalo</div>
<svg style="left:229px;top:550px" width="20" height="20"><ellipse cx="9" cy="12" rx="8" ry="6.500" fill="#c8a878"/><circle cx="6" cy="11" r="1.500" fill="#d04040"/><circle cx="9" cy="9" r="1.500" fill="#3aa0d8"/><circle cx="12" cy="11" r="1.500" fill="#f0d040"/><path d="M12 8l5-7 2 1-4 8z" fill="#ddd"/></svg>
<svg style="left:266px;top:551px" width="18" height="20"><ellipse cx="9" cy="10" rx="8" ry="9" fill="#d81e28"/><ellipse cx="9" cy="10" rx="3.500" ry="7" fill="#1f2460"/></svg>
<div style="left:331px;top:546px;width:36px;height:30px;background:#3f4298"></div>
<div style="left:302px;top:552px;width:18px;height:18px;background:#1ea0dc;border-radius:6px"></div>
<div class="t" style="left:306px;top:555px;color:#fff;font-weight:bold;font-size:12px">S</div>
<div style="left:339px;top:552px;width:18px;height:18px;background:#f4f4f4;border-radius:4px"></div>
<svg style="left:342px;top:555px" width="12" height="12"><circle cx="6" cy="6" r="5.500" fill="#2fae9c"/><path d="M6 .5A5.500 5.500 0 0 1 11.500 6H6z" fill="#e8583c"/><path d="M6 6h5.500A5.500 5.500 0 0 1 6 11.500z" fill="#f2b83c"/><circle cx="6" cy="6" r="2.500" fill="#fff"/></svg>
<div class="tk" style="left:187px;width:30px"></div><div class="tk" style="left:223px;width:30px"></div><div class="tk" style="left:260px;width:30px"></div><div class="tk" style="left:296px;width:30px"></div><div class="tk" style="left:331px;width:36px"></div>
<svg style="left:831px;top:553px" width="14" height="14" fill="none" stroke="#ddd"><circle cx="8.500" cy="4" r="2.500"/><path d="M4 12c0-3 2-5 4-5s4 1 5 3M1 13c0-2 1-5 3-5"/></svg>
<svg style="left:860px;top:557px" width="10" height="6" fill="none" stroke="#ddd"><path d="M.5 5.500L5 1l4.500 4.500"/></svg>
<svg style="left:876px;top:555px" width="13" height="11" fill="none" stroke="#ddd"><rect x="3.500" y="3.500" width="9" height="6" fill="#ddd"/><path d="M0 2h3v3"/></svg>
<svg style="left:894px;top:555px" width="13" height="11" fill="none" stroke="#ddd"><path d="M1 4h2l3-3v9L3 7H1zM8 3c1 1 1 4 0 5M10 1c2 2 2 7 0 9"/></svg>
<div class="t" style="left:914px;top:555px;color:#e8e8e8;font-size:9.500px">ENG</div>
<div class="t" style="left:941px;top:549px;width:38px;text-align:center;color:#eee;font-size:9px;line-height:13px">12:16 PM</div>
<div class="t" style="left:939px;top:562px;width:42px;text-align:center;color:#eee;font-size:9px;line-height:13px">7/27/2021</div>
<svg style="left:992px;top:554px" width="14" height="13"><path d="M0 0h13v9H5l-3 3V9H0z" fill="#eee"/><path d="M2 3h9M2 5.500h9" stroke="#1f2460"/></svg>
<div style="left:999px;top:561px;width:11px;height:11px;border-radius:50%;background:#3a4f8c;border:1px solid #ccc;color:#fff;font-size:8px;line-height:9px;text-align:center">1</div>
<div style="left:1020px;top:546px;width:1px;height:30px;background:#8a8cc0"></div>
</body></html>
